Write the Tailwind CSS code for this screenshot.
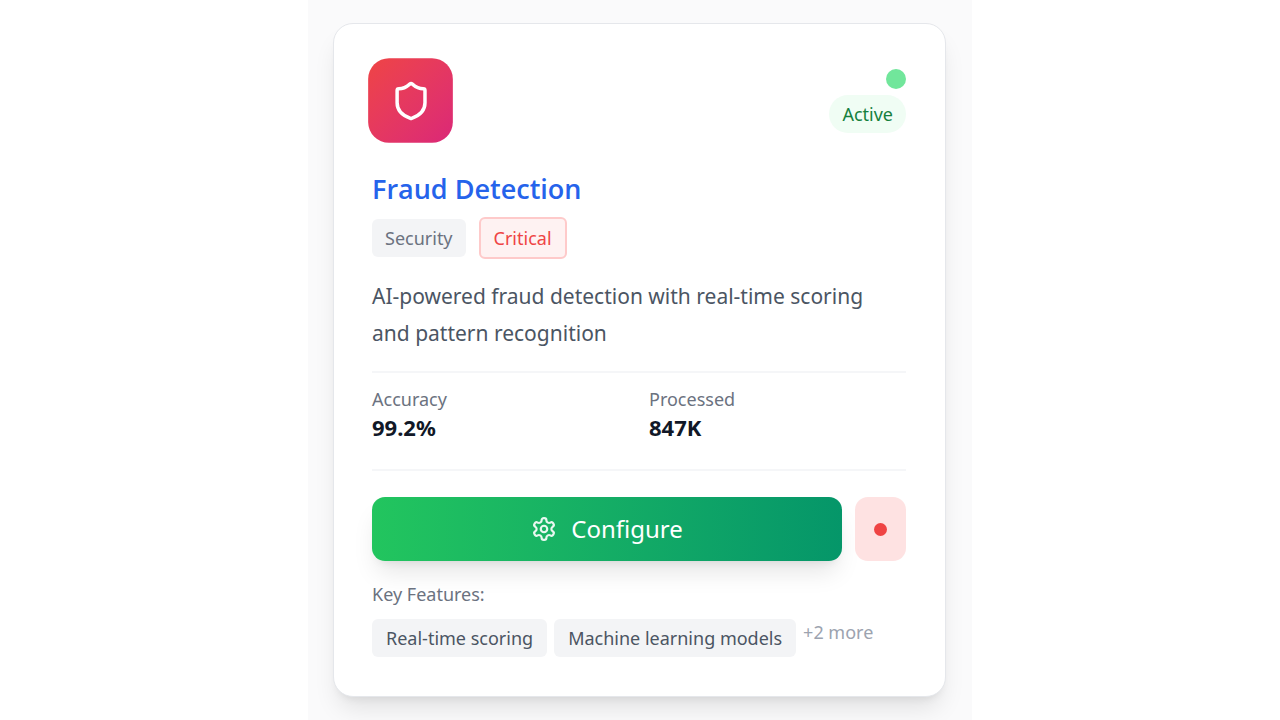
<!DOCTYPE html>
<html lang="en">

<head>
    <meta charset="UTF-8" />
    <meta name="viewport" content="width=device-width, initial-scale=1.0" />
    <title>Fraud Detection</title>
    <script src="https://cdn.jsdelivr.net/npm/@tailwindcss/browser@4"></script>
</head>

<body class="bg-white font-['Noto_Sans',sans-serif] text-[18px] leading-[26px] overflow-x-hidden">
    <main class="max-w-[664px] mx-auto pl-[25px] pr-[26px] py-[23px] bg-[#fafafb]">
        <!-- Model card -->
        <article class="bg-white rounded-[20px] border border-[#e5e7eb] shadow-[0_16px_24px_-5px_rgba(0,0,0,0.1),0_6px_10px_-6px_rgba(0,0,0,0.1)] pl-[38px] pr-[39px] pt-[38px] pb-[39px]">
            <div class="flex items-center justify-between">
                <div class="size-[77px] scale-110 rounded-[19px] bg-linear-to-br from-[#ef4444] to-[#db2777] flex items-center justify-center">
                    <svg class="size-[38px] text-white" viewBox="0 0 24 24" fill="none" stroke="currentColor" stroke-width="2" stroke-linecap="round" stroke-linejoin="round">
                        <path d="M20 13c0 5-3.5 7.5-7.66 8.95a1 1 0 0 1-.67-.01C7.5 20.5 4 18 4 13V6a1 1 0 0 1 1-1c2 0 4.5-1.2 6.24-2.72a1.17 1.17 0 0 1 1.52 0C14.51 3.81 17 5 19 5a1 1 0 0 1 1 1z" />
                    </svg>
                </div>
                <div class="flex flex-col items-end gap-1.5">
                    <span class="size-5 rounded-full bg-[#71e69b]"></span>
                    <span class="px-[13px] py-1.5 rounded-full bg-[#f0fdf4] text-[#15803d]">Active</span>
                </div>
            </div>

            <h2 class="mt-8 text-[27px] leading-[36px] font-['Open_Sans',sans-serif] font-semibold text-[#2563eb]">Fraud Detection</h2>
            <div class="mt-2.5 flex items-center gap-[13px]">
                <span class="px-[13px] py-1.5 rounded-md bg-[#f3f4f6] text-[#6b7280]">Security</span>
                <span class="px-[13px] py-1.5 rounded-md border-2 border-[#fecaca] bg-[#fef2f2] text-[#ef4444]">Critical</span>
            </div>

            <p class="mt-[19px] text-[21px] leading-[37px] text-[#4b5563]">AI-powered fraud detection with real-time scoring and pattern recognition</p>

            <dl class="mt-[19px] grid grid-cols-2 gap-5 border-y-2 border-[#f3f4f6]/80 pt-[13px] pb-[27px]">
                <div>
                    <dt class="text-[#6b7280]">Accuracy</dt>
                    <dd class="text-[22px] leading-[30px] font-bold text-[#111827]">99.2%</dd>
                </div>
                <div>
                    <dt class="text-[#6b7280]">Processed</dt>
                    <dd class="text-[22px] leading-[30px] font-bold text-[#111827]">847K</dd>
                </div>
            </dl>

            <div class="mt-[26px] flex gap-[13px]">
                <button type="button" class="h-16 flex-1 flex items-center justify-center gap-[14px] rounded-[13px] bg-linear-to-r from-[#22c55e] to-[#059669] text-white text-[24px] shadow-[0_16px_24px_-5px_rgba(0,0,0,0.1),0_6px_10px_-6px_rgba(0,0,0,0.1)]">
                    <svg class="size-[26px] text-white/90" viewBox="0 0 24 24" fill="none" stroke="currentColor" stroke-width="2" stroke-linecap="round" stroke-linejoin="round">
                        <path d="M12.22 2h-.44a2 2 0 0 0-2 2v.18a2 2 0 0 1-1 1.73l-.43.25a2 2 0 0 1-2 0l-.15-.08a2 2 0 0 0-2.73.73l-.22.38a2 2 0 0 0 .73 2.73l.15.1a2 2 0 0 1 1 1.72v.51a2 2 0 0 1-1 1.74l-.15.09a2 2 0 0 0-.73 2.73l.22.38a2 2 0 0 0 2.73.73l.15-.08a2 2 0 0 1 2 0l.43.25a2 2 0 0 1 1 1.73V20a2 2 0 0 0 2 2h.44a2 2 0 0 0 2-2v-.18a2 2 0 0 1 1-1.73l.43-.25a2 2 0 0 1 2 0l.15.08a2 2 0 0 0 2.73-.73l.22-.39a2 2 0 0 0-.73-2.73l-.15-.08a2 2 0 0 1-1-1.74v-.5a2 2 0 0 1 1-1.74l.15-.09a2 2 0 0 0 .73-2.73l-.22-.38a2 2 0 0 0-2.73-.73l-.15.08a2 2 0 0 1-2 0l-.43-.25a2 2 0 0 1-1-1.73V4a2 2 0 0 0-2-2z" />
                        <circle cx="12" cy="12" r="3" />
                    </svg>
                    Configure
                </button>
                <button type="button" aria-label="Stop" class="h-16 w-[51px] flex items-center justify-center rounded-[13px] bg-[#fee2e2]">
                    <span class="size-[13px] rounded-full bg-[#ef4444]"></span>
                </button>
            </div>

            <h3 class="mt-5 text-[#6b7280]">Key Features:</h3>
            <ul class="mt-3 flex flex-wrap items-start gap-[7px]">
                <li class="px-[14px] py-1.5 rounded-md bg-[#f3f4f6] text-[#4b5563]">Real-time scoring</li>
                <li class="px-[14px] py-1.5 rounded-md bg-[#f3f4f6] text-[#4b5563]">Machine learning models</li>
                <li class="text-[#9ca3af]">+2 more</li>
            </ul>
        </article>
    </main>
</body>

</html>
